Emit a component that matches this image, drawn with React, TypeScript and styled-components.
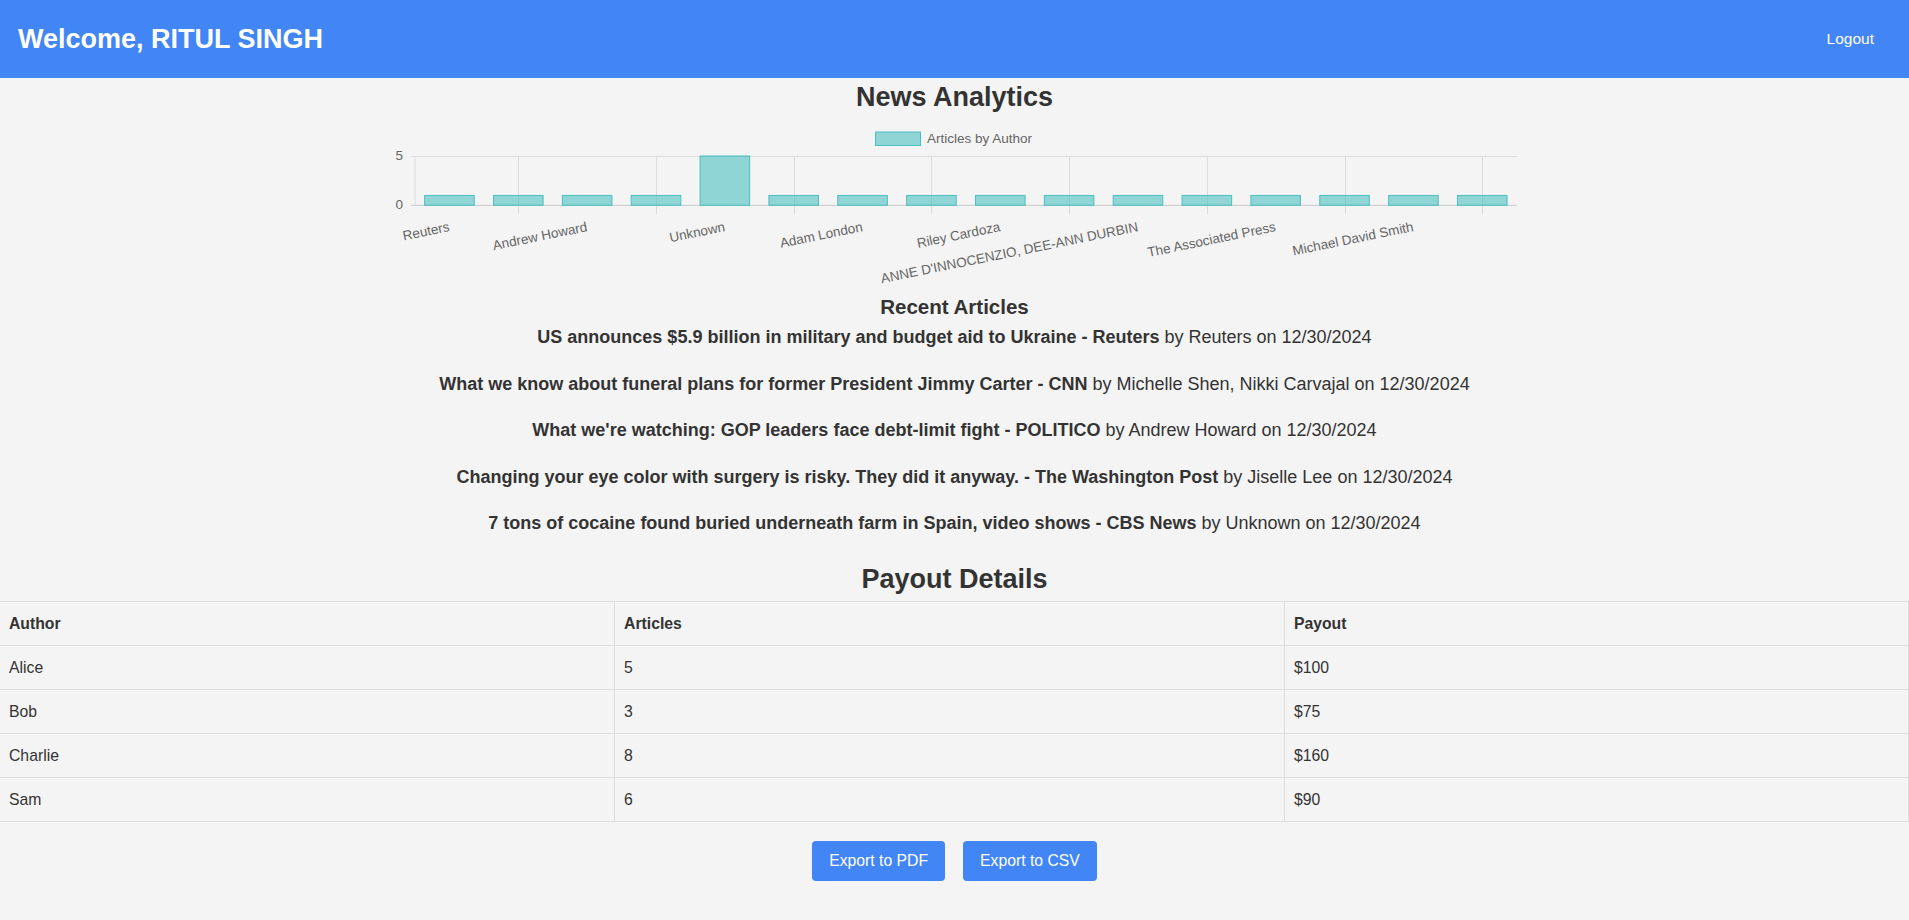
import React from "react";
import styled, { createGlobalStyle } from "styled-components";

const GlobalStyle = createGlobalStyle`
  html, body {
    margin: 0;
    padding: 0;
    background: #f4f4f4;
  }
  body {
    font-family: "Liberation Sans", Arial, Helvetica, sans-serif;
    color: #333;
  }
`;

const Page = styled.div`
  min-height: 920px;
  background: #f4f4f4;
`;

const Header = styled.header`
  height: 78px;
  box-sizing: border-box;
  background: #4285f4;
  display: flex;
  align-items: center;
  justify-content: space-between;
  padding: 0 18px;
`;

const Welcome = styled.h1`
  margin: 0;
  font-size: 27px;
  line-height: 31px;
  font-weight: bold;
  color: #fff;
`;

const LogoutButton = styled.button`
  background: transparent;
  border: none;
  color: #fff;
  font-family: inherit;
  font-size: 15.5px;
  padding: 8px 17px;
  cursor: pointer;
`;

const Main = styled.main`
  display: flex;
  flex-direction: column;
  align-items: center;
  text-align: center;
`;

const SectionTitle = styled.h2<{ $top: number }>`
  margin: ${(p) => p.$top}px 0 0;
  font-size: 27px;
  line-height: 31px;
  font-weight: bold;
  color: #333;
`;

const ChartSvg = styled.svg`
  display: block;
  width: 1145px;
  height: 182px;
  font-family: "Liberation Sans", Arial, sans-serif;
`;

const SubTitle = styled.h3`
  margin: 0;
  font-size: 20.5px;
  line-height: 24px;
  font-weight: bold;
  color: #333;
`;

const ArticleList = styled.div`
  display: flex;
  flex-direction: column;
  align-items: center;
  gap: 25.5px;
  margin-top: 8px;
`;

const ArticleLine = styled.p`
  margin: 0;
  font-size: 18px;
  line-height: 21px;
  color: #333;
  strong {
    font-weight: bold;
  }
`;

const Table = styled.table`
  width: 100%;
  margin-top: 6px;
  border-collapse: collapse;
  text-align: left;
  font-size: 15.75px;
`;

const Th = styled.th<{ $w: string }>`
  width: ${(p) => p.$w};
  border: 1px solid #ddd;
  padding: 12.5px 9px;
  line-height: 18px;
  font-weight: bold;
  color: #333;
  text-align: left;
  &:first-child {
    border-left: none;
  }
`;

const Td = styled.td`
  border: 1px solid #ddd;
  padding: 12.5px 9px;
  line-height: 18px;
  color: #333;
  &:first-child {
    border-left: none;
  }
`;

const ButtonRow = styled.div`
  display: flex;
  justify-content: center;
  gap: 18px;
  margin-top: 19px;
`;

const ExportButton = styled.button`
  height: 40px;
  padding: 0 17px;
  background: #4285f4;
  color: #fff;
  border: none;
  border-radius: 4px;
  font-family: inherit;
  font-size: 15.75px;
  cursor: pointer;
`;

const authors = [
  { name: "Reuters", count: 1 },
  { name: "Michelle Shen, Nikki Carvajal", count: 1 },
  { name: "Andrew Howard", count: 1 },
  { name: "Jiselle Lee", count: 1 },
  { name: "Unknown", count: 5 },
  { name: "Sarah Johnson", count: 1 },
  { name: "Adam London", count: 1 },
  { name: "Emily Davis", count: 1 },
  { name: "Riley Cardoza", count: 1 },
  { name: "Jessica Smith", count: 1 },
  { name: "ANNE D'INNOCENZIO, DEE-ANN DURBIN", count: 1 },
  { name: "Daniel Brown", count: 1 },
  { name: "The Associated Press", count: 1 },
  { name: "Laura Wilson", count: 1 },
  { name: "Michael David Smith", count: 1 },
  { name: "Chris Taylor", count: 1 },
];

const articles = [
  {
    title: "US announces $5.9 billion in military and budget aid to Ukraine - Reuters",
    author: "Reuters",
  },
  {
    title: "What we know about funeral plans for former President Jimmy Carter - CNN",
    author: "Michelle Shen, Nikki Carvajal",
  },
  {
    title: "What we're watching: GOP leaders face debt-limit fight - POLITICO",
    author: "Andrew Howard",
  },
  {
    title: "Changing your eye color with surgery is risky. They did it anyway. - The Washington Post",
    author: "Jiselle Lee",
  },
  {
    title: "7 tons of cocaine found buried underneath farm in Spain, video shows - CBS News",
    author: "Unknown",
  },
];

const payouts = [
  { author: "Alice", articles: 5, payout: "$100" },
  { author: "Bob", articles: 3, payout: "$75" },
  { author: "Charlie", articles: 8, payout: "$160" },
  { author: "Sam", articles: 6, payout: "$90" },
];

const BarChart: React.FC = () => {
  const left = 33;
  const right = 1134.7;
  const top = 43;
  const base = 92.3;
  const cat = (right - left) / authors.length;
  const barW = cat * 0.72;
  const unit = (base - top) / 5;
  const grid = "#dcdcdc";
  const fill = "rgba(75,192,192,0.6)";
  const stroke = "rgb(75,192,192)";
  const labelColor = "#666";
  return (
    <ChartSvg viewBox="0 0 1145 182">
      <rect x={493.5} y={19} width={45} height={13.5} fill={fill} stroke={stroke} strokeWidth={1} />
      <text x={545} y={26} fontSize={13.5} fill={labelColor} dominantBaseline="middle">
        Articles by Author
      </text>
      <line x1={29} x2={right} y1={top + 0.5} y2={top + 0.5} stroke={grid} strokeWidth={1} />
      <line x1={29} x2={right} y1={base} y2={base} stroke="#c9c9c9" strokeWidth={1} />
      <line x1={left} x2={left} y1={top} y2={base} stroke={grid} strokeWidth={1} />
      {authors.map((_, i) =>
        i % 2 === 1 ? (
          <line
            key={`g${i}`}
            x1={Math.round(left + cat * (i + 0.5)) + 0.5}
            x2={Math.round(left + cat * (i + 0.5)) + 0.5}
            y1={top}
            y2={101}
            stroke={grid}
            strokeWidth={1}
          />
        ) : null
      )}
      <text x={21} y={top} fontSize={13.5} fill={labelColor} textAnchor="end" dominantBaseline="middle">
        5
      </text>
      <text x={21} y={base} fontSize={13.5} fill={labelColor} textAnchor="end" dominantBaseline="middle">
        0
      </text>
      {authors.map((a, i) => {
        const cx = left + cat * (i + 0.5);
        const h = a.count * unit;
        return (
          <rect
            key={`b${i}`}
            x={cx - barW / 2}
            y={base - h}
            width={barW}
            height={h}
            fill={fill}
            stroke={stroke}
            strokeWidth={1}
          />
        );
      })}
      {authors.map((a, i) => {
        if (i % 2 !== 0) return null;
        const cx = left + cat * (i + 0.5);
        const y = 114.5;
        return (
          <text
            key={`l${i}`}
            x={cx}
            y={y}
            fontSize={13.5}
            fill={labelColor}
            textAnchor="end"
            dominantBaseline="middle"
            transform={`rotate(-11.5 ${cx} ${y})`}
          >
            {a.name}
          </text>
        );
      })}
    </ChartSvg>
  );
};

export default function App() {
  return (
    <Page>
      <GlobalStyle />
      <Header>
        <Welcome>Welcome, RITUL SINGH</Welcome>
        <LogoutButton>Logout</LogoutButton>
      </Header>
      <Main>
        <SectionTitle $top={4}>News Analytics</SectionTitle>
        <BarChart />
        <SubTitle>Recent Articles</SubTitle>
        <ArticleList>
          {articles.map((a) => (
            <ArticleLine key={a.title}>
              <strong>{a.title}</strong> by {a.author} on 12/30/2024
            </ArticleLine>
          ))}
        </ArticleList>
        <SectionTitle $top={30}>Payout Details</SectionTitle>
        <Table>
          <thead>
            <tr>
              <Th $w="32.2%">Author</Th>
              <Th $w="35.1%">Articles</Th>
              <Th $w="32.7%">Payout</Th>
            </tr>
          </thead>
          <tbody>
            {payouts.map((p) => (
              <tr key={p.author}>
                <Td>{p.author}</Td>
                <Td>{p.articles}</Td>
                <Td>{p.payout}</Td>
              </tr>
            ))}
          </tbody>
        </Table>
        <ButtonRow>
          <ExportButton>Export to PDF</ExportButton>
          <ExportButton>Export to CSV</ExportButton>
        </ButtonRow>
      </Main>
    </Page>
  );
}
